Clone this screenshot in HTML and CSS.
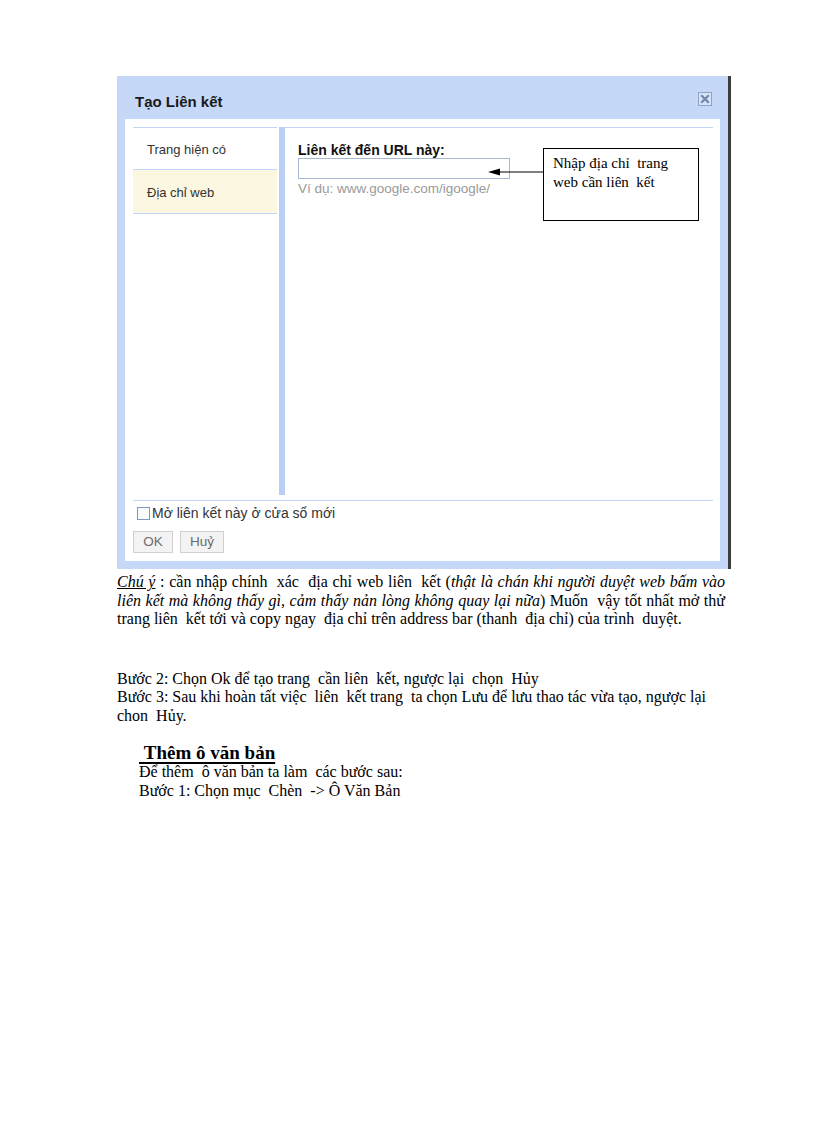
FILE: index.html
```html
<!DOCTYPE html>
<html lang="vi">
<head>
<meta charset="utf-8">
<title>Tạo Liên kết</title>
<link rel="stylesheet" href="styles.css">
</head>
<body>
<div class="page">
  <div class="figure">
    <div class="dialog">
      <div class="titlebar">
        <span class="title">Tạo Liên kết</span>
        <span class="close">
          <svg width="12" height="12" viewBox="0 0 12 12"><path d="M3 3 L9 9 M9 3 L3 9" stroke="#7186aa" stroke-width="2.2" stroke-linecap="square"/></svg>
        </span>
      </div>
      <div class="dbody">
        <div class="panes">
          <div class="nav">
            <div class="nav-item">Trang hiện có</div>
            <div class="nav-item active">Địa chỉ web</div>
          </div>
          <div class="divider"></div>
          <div class="content">
            <div class="label">Liên kết đến URL này:</div>
            <div class="input"></div>
            <div class="hint">Ví dụ: www.google.com/igoogle/</div>
          </div>
        </div>
        <div class="footer">
          <label class="check"><span class="box"></span><span>Mở liên kết này ở cửa sổ mới</span></label>
          <div class="buttons">
            <span class="btn btn-ok">OK</span>
            <span class="btn btn-cancel">Huỷ</span>
          </div>
        </div>
      </div>
    </div>
    <svg class="arrow" width="56" height="10" viewBox="0 0 56 10">
      <line x1="10" y1="5" x2="56" y2="5" stroke="#000" stroke-width="1"/>
      <polygon points="0,5 12,1.5 12,8.5" fill="#000"/>
    </svg>
    <div class="callout">Nhập địa chỉ&nbsp; trang<br>web cần liên&nbsp; kết</div>
  </div>

  <p class="note">
    <span class="jl"><em class="u">Chú ý</em> : cần nhập chính&nbsp; xác&nbsp; địa chỉ web liên&nbsp; kết (<em>thật là chán khi người duyệt web bấm vào</em></span>
    <span class="jl"><em>liên kết mà không thấy gì, cảm thấy nản lòng không quay lại nữa</em>) Muốn&nbsp; vậy tốt nhất mở thử</span>
    <span class="ll">trang liên&nbsp; kết tới và copy ngay&nbsp; địa chỉ trên address bar (thanh&nbsp; địa chỉ) của trình&nbsp; duyệt.</span>
  </p>

  <div class="steps">
    <p>Bước 2: Chọn Ok để tạo trang&nbsp; cần liên&nbsp; kết, ngược lại&nbsp; chọn&nbsp; Hủy</p>
    <p>Bước 3: Sau khi hoàn tất việc&nbsp; liên&nbsp; kết trang&nbsp; ta chọn Lưu để lưu thao tác vừa tạo, ngược lại chon&nbsp; Hủy.</p>
  </div>

  <div class="section">
    <h2 class="heading">&nbsp;Thêm ô văn bản</h2>
    <p>Để thêm&nbsp; ô văn bản ta làm&nbsp; các bước sau:</p>
    <p>Bước 1: Chọn mục&nbsp; Chèn&nbsp; -&gt; Ô Văn Bản</p>
  </div>
</div>
</body>
</html>
```

FILE: styles.css
```css
html, body {
  margin: 0;
  padding: 0;
  background: #fff;
}

.page {
  padding: 76px 0 0 117px;
  width: 608px;
  font-family: "Liberation Serif", "Times New Roman", serif;
  font-size: 16px;
  line-height: 18.5px;
  color: #000;
}

p {
  margin: 0;
}

/* ---------- dialog ---------- */
.figure {
  position: relative;
  width: 613px;
}

.dialog {
  width: 595px;
  background: #c5d8f8;
  padding: 0 8px 8px 8px;
  border-right: 3px solid #3c3c3c;
  font-family: "Liberation Sans", Arial, sans-serif;
  color: #222;
}

.titlebar {
  height: 43px;
  display: flex;
  justify-content: space-between;
  align-items: flex-start;
  padding: 0 8px 0 10px;
}

.title {
  margin-top: 17px;
  font-size: 15px;
  font-weight: bold;
  line-height: 17px;
  color: #1a1a1a;
}

.close {
  margin-top: 16px;
  width: 12px;
  height: 12px;
  border: 1px solid #8fa3c6;
  background: #d6e3f8;
  display: flex;
  align-items: center;
  justify-content: center;
}

.close svg {
  display: block;
}

.dbody {
  background: #fff;
  height: 442px;
  padding: 8px 7px 0 8px;
  box-sizing: border-box;
  display: flex;
  flex-direction: column;
}

.panes {
  display: flex;
  height: 368px;
}

.nav {
  width: 144px;
  border-top: 1px solid #c3d6f7;
}

.nav-item {
  height: 42px;
  border-bottom: 1px solid #c3d6f7;
  padding: 2px 0 0 14px;
  font-size: 13px;
  line-height: 40px;
  color: #333;
  box-sizing: border-box;
}

.nav-item.active {
  height: 44px;
  line-height: 42px;
  background: #fcf7e1;
}

.divider {
  width: 6px;
  margin-left: 2px;
  background: #b9cff4;
}

.content {
  flex: 1;
  border-top: 1px solid #c3d6f7;
  padding: 15px 0 0 13px;
}

.label {
  font-size: 14px;
  font-weight: bold;
  line-height: 15px;
  color: #111;
}

.input {
  width: 210px;
  height: 19px;
  border: 1px solid #a7b8d3;
  background: #fff;
}

.hint {
  margin-top: 2px;
  font-size: 13.5px;
  line-height: 16px;
  color: #9a9a9a;
}

.footer {
  margin-top: 5px;
  border-top: 1px solid #c3d6f7;
  padding: 5px 0 0 0;
}

.check {
  display: flex;
  align-items: center;
  gap: 2px;
  padding-left: 4px;
  font-size: 14px;
  line-height: 14px;
  color: #333;
}

.box {
  width: 11px;
  height: 11px;
  border: 1px solid #7f98b9;
  background: #fbfbfb;
}

.buttons {
  display: flex;
  gap: 7px;
  margin-top: 11px;
}

.btn {
  height: 20px;
  border: 1px solid #d0d0d0;
  background: #f3f3f3;
  color: #6b6b6b;
  font-size: 13.5px;
  line-height: 20px;
  text-align: center;
}

.btn-ok {
  width: 38px;
}

.btn-cancel {
  width: 42px;
}

/* ---------- annotation ---------- */
.callout {
  position: absolute;
  left: 426px;
  top: 72px;
  width: 145px;
  height: 66px;
  border: 1px solid #000;
  background: #fff;
  padding: 5px 0 0 9px;
  font-family: "Liberation Serif", "Times New Roman", serif;
  font-size: 15px;
  line-height: 19px;
  color: #000;
}

.arrow {
  position: absolute;
  left: 371px;
  top: 91px;
  display: block;
}

/* ---------- document text ---------- */
.note {
  margin-top: 4px;
}

.note .jl {
  display: block;
  text-align: justify;
  text-align-last: justify;
}

.note .ll {
  display: block;
}

.u {
  text-decoration: underline;
}

.steps {
  margin-top: 41px;
}

.section {
  margin-top: 17px;
  padding-left: 22px;
}

.heading {
  margin: 0;
  font-size: 19px;
  line-height: 21px;
  font-weight: bold;
  text-decoration: underline;
  text-decoration-thickness: 2px;
  text-underline-offset: 3px;
}
```
